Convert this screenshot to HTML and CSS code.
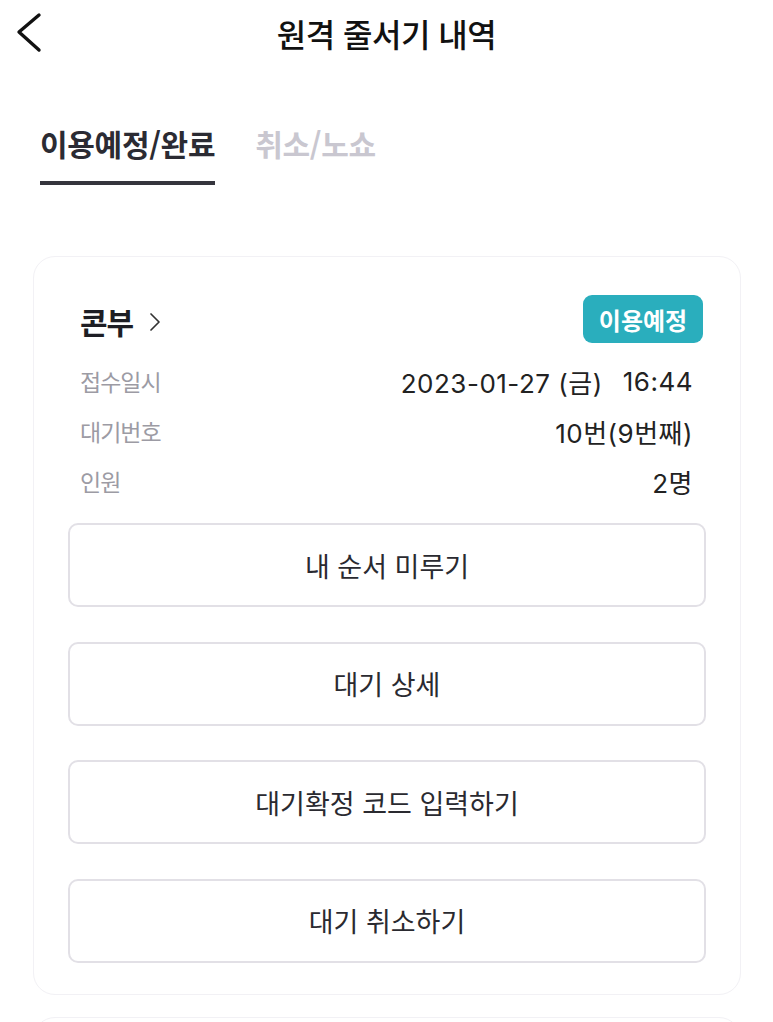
FILE: index.html
```html
<!DOCTYPE html>
<html lang="ko">
<head>
<meta charset="utf-8">
<title>원격 줄서기 내역</title>
<link rel="stylesheet" href="styles.css">
</head>
<body>
<header class="topbar">
  <button class="back" aria-label="뒤로">
    <svg width="34" height="44" viewBox="0 0 34 44"><path d="M25 3 L5 20 L25 38" fill="none" stroke="#111" stroke-width="3.4" stroke-linecap="round" stroke-linejoin="round"/></svg>
  </button>
  <h1 class="title">원격 줄서기 내역</h1>
</header>

<nav class="tabs">
  <div class="tab active">이용예정/완료</div>
  <div class="tab">취소/노쇼</div>
</nav>

<section class="card">
  <div class="card-head">
    <div class="store">콘부 <svg class="chev" width="12" height="20" viewBox="0 0 12 20"><path d="M2 2 L10 10 L2 18" fill="none" stroke="#333" stroke-width="1.7" stroke-linecap="round" stroke-linejoin="round"/></svg></div>
    <span class="badge">이용예정</span>
  </div>
  <div class="rows">
    <div class="row"><span class="label">접수일시</span><span class="value">2023-01-27 (금)<span class="sep"></span>16:44</span></div>
    <div class="row"><span class="label">대기번호</span><span class="value">10번(9번째)</span></div>
    <div class="row"><span class="label">인원</span><span class="value">2명</span></div>
  </div>
  <div class="actions">
    <button class="btn">내 순서 미루기</button>
    <button class="btn">대기 상세</button>
    <button class="btn">대기확정 코드 입력하기</button>
    <button class="btn">대기 취소하기</button>
  </div>
</section>

<section class="card next"></section>
</body>
</html>
```

FILE: styles.css
```css
* { box-sizing: border-box; }
html, body { margin: 0; padding: 0; background: #ffffff; }
html { height: 1022px; overflow: hidden; }
body {
  height: 1022px;
  font-family: Inter, "Noto Sans CJK KR", sans-serif;
  color: #111;
  overflow: hidden;
}
.topbar {
  height: 66px;
  display: flex;
  align-items: center;
  justify-content: center;
  position: relative;
}
.back {
  position: absolute;
  left: 14px;
  top: 12px;
  background: none;
  border: 0;
  padding: 0;
  width: 34px;
  height: 44px;
}
.title {
  margin: 0;
  font-size: 32px;
  font-weight: 500;
  letter-spacing: -0.5px;
  color: #111;
  font-family: "Noto Sans CJK KR", sans-serif;
}
.tabs {
  display: flex;
  gap: 40px;
  padding: 52px 0 0 40px;
}
.tab {
  font-family: "Noto Sans CJK KR", sans-serif;
  font-size: 30px;
  font-weight: 700;
  letter-spacing: -0.3px;
  color: #c9c7d0;
  height: 67px;
  line-height: 50px;
  border-bottom: 4px solid transparent;
}
.tab.active {
  color: #2b2b33;
  border-bottom-color: #35353d;
}
.card {
  margin: 71px 32px 0 33px;
  border: 1.5px solid #f2f1f5;
  border-radius: 22px;
  padding: 38px 34px 31px 34px;
  background: #fff;
}
.card.next {
  margin-top: 22px;
  height: 80px;
}
.card-head {
  display: flex;
  justify-content: space-between;
  align-items: center;
  height: 48px;
  padding: 0 3px 0 12px;
}
.store {
  font-family: "Noto Sans CJK KR", sans-serif;
  font-size: 30px;
  font-weight: 700;
  color: #1e1e24;
  display: flex;
  align-items: center;
  gap: 16px;
  letter-spacing: -1px;
  padding-top: 4px;
}
.chev { margin-top: 2px; }
.badge {
  width: 120px;
  height: 48px;
  border-radius: 9px;
  background: #2aaebd;
  color: #fff;
  font-family: "Noto Sans CJK KR", sans-serif;
  font-weight: 700;
  font-size: 24px;
  letter-spacing: 0;
  display: flex;
  align-items: center;
  justify-content: center;
}
.rows {
  padding: 13px 13px 0 12px;
}
.row {
  display: flex;
  justify-content: space-between;
  align-items: center;
  height: 50px;
}
.label {
  font-family: "Noto Sans CJK KR", sans-serif;
  font-size: 23px;
  color: #9c9ba4;
  letter-spacing: -1px;
}
.value {
  font-size: 26px;
  color: #222;
  letter-spacing: 0.5px;
  display: flex;
  align-items: center;
}
.sep { display: inline-block; width: 20px; }
.actions {
  display: flex;
  flex-direction: column;
  gap: 34.5px;
  margin-top: 17px;
}
.btn {
  height: 84px;
  width: 100%;
  background: #fff;
  border: 2px solid #e2e0e6;
  border-radius: 10px;
  font-family: "Noto Sans CJK KR", sans-serif;
  font-size: 27px;
  color: #2a2a30;
  letter-spacing: 0;
  padding: 0;
}
```
